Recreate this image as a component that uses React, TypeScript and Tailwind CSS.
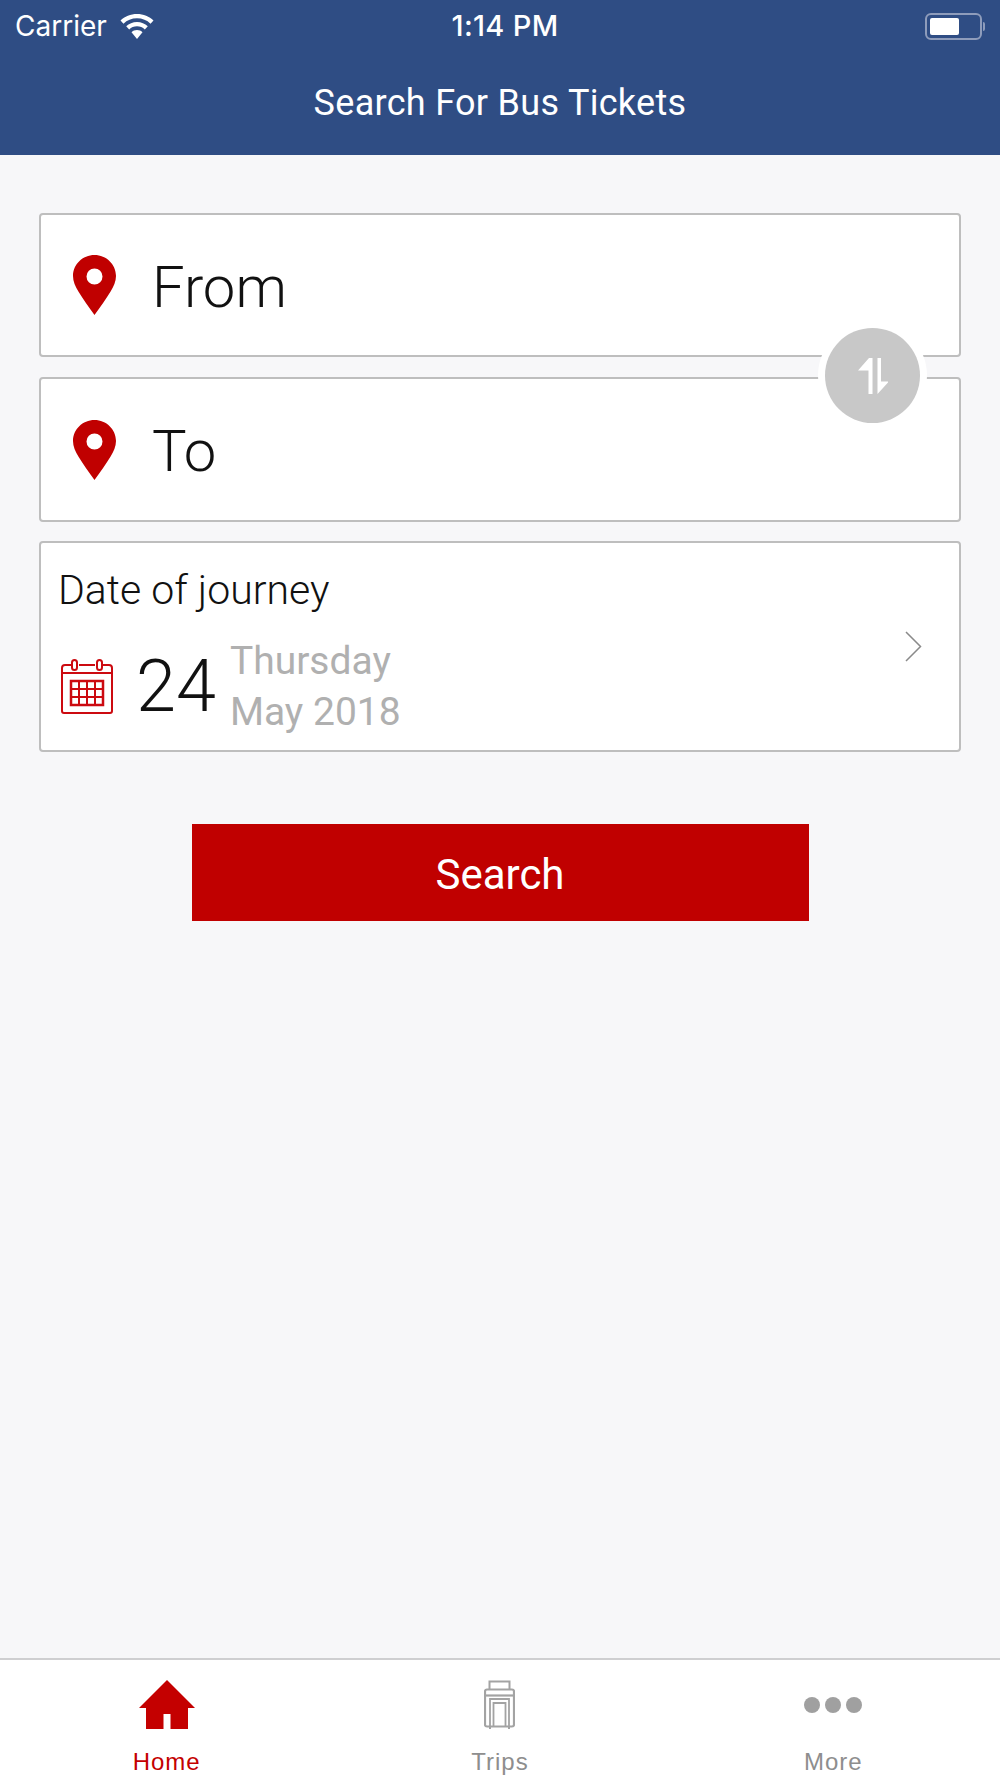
const Pin = ({ className }: { className: string }) => (
  <svg className={className} width="43" height="60" viewBox="0 0 43 60">
    <path
      fillRule="evenodd"
      d="M21.5 0C9.6 0 0 9.4 0 21c0 5.4 2.4 10.6 5.4 15.5C9.7 43.700 15.800 52 21.500 60c5.700-8 11.800-16.300 16.100-23.500C40.600 31.600 43 26.400 43 21 43 9.400 33.400 0 21.500 0zm0 13.500a8 8 0 1 1 0 16 8 8 0 0 1 0-16z"
      fill="#c00000"
    />
  </svg>
);

const Calendar = () => (
  <svg width="52" height="55" viewBox="0 0 52 55" fill="none" stroke="#cc0a10" strokeWidth="2" className="shrink-0">
    <path d="M11 6H4a3 3 0 0 0-3 3v43a2 2 0 0 0 2 2h46a2 2 0 0 0 2-2V9a3 3 0 0 0-3-3h-6M18 6h16" />
    <path d="M1 14h50" />
    <rect x="11" y="1" width="5" height="10" rx="2.500" fill="#fff" />
    <rect x="36" y="1" width="5" height="10" rx="2.500" fill="#fff" />
    <rect x="10" y="22" width="32" height="24" strokeWidth="2.500" />
    <path d="M18 22v24M26 22v24M34 22v24M10 30h32M10 38h32" />
  </svg>
);

const Home = () => (
  <svg width="56" height="49" viewBox="0 0 56 49">
    <path d="M28 0 56 28H49V49H31.500V34H24.500V49H7V28H0z" fill="#c40000" />
  </svg>
);

const Suitcase = () => (
  <svg width="31" height="49" viewBox="0 0 31 49" fill="none" stroke="#a3a3a3" strokeWidth="1.500">
    <path d="M5.500 9V1.500h20V9" strokeWidth="2" />
    <path d="M3 9.500h25a2 2 0 0 1 2 2v33a2 2 0 0 1-2 2H3a2 2 0 0 1-2-2v-33a2 2 0 0 1 2-2z" strokeWidth="2.200" />
    <path d="M1 15.500h29" strokeWidth="2.200" />
    <path d="M6 46V19h19v27M9.500 46V23h12v23" strokeWidth="1.800" />
    <path d="M6 47v2M25 47v2" strokeWidth="2" />
  </svg>
);

const Wifi = () => (
  <svg width="34" height="25" viewBox="0 0 34 25" fill="#fff">
    <path d="M17 0C10.500 0 4.700 2.500.500 6.500l3 3.200C7 6.300 11.700 4.300 17 4.300s10 2 13.500 5.400l3-3.200C29.300 2.500 23.500 0 17 0z" />
    <path d="M17 8c-4.200 0-8 1.600-10.800 4.300l3 3.200c2-2 4.800-3.200 7.800-3.200s5.800 1.200 7.800 3.200l3-3.200C25 9.600 21.200 8 17 8z" />
    <path d="M17 16c-2.200 0-4.100.9-5.500 2.300L17 25l5.500-6.700C21.100 16.900 19.200 16 17 16z" />
  </svg>
);

const Tab = ({ label, color, children }: { label: string; color: string; children: React.ReactNode }) => (
  <div className="flex flex-1 flex-col items-center">
    <div className="flex h-[49px] items-center">{children}</div>
    <span className={`mt-[18px] text-[24px] leading-[30px] tracking-[1px] font-['Liberation_Sans',sans-serif] ${color}`}>
      {label}
    </span>
  </div>
);

export default function App() {
  return (
    <div className="flex h-[1778px] w-[1000px] flex-col overflow-hidden bg-[#f7f7f9] font-['Roboto',sans-serif]">
      <header className="h-[155px] shrink-0 bg-[#2f4d84] text-white">
        <div className="flex h-[50px] items-center justify-between pl-[15px] pr-[15px] pt-[2px] font-['Inter',sans-serif] text-[28px]">
          <div className="flex w-[310px] items-center gap-[13px]">
            <span>Carrier</span>
            <Wifi />
          </div>
          <span className="text-[29px] font-medium tracking-[0.3px]">1:14 PM</span>
          <div className="flex w-[300px] items-center justify-end">
            <div className="h-[27px] w-[57px] rounded-[6px] border-2 border-[#8e9cbb] p-[3px]">
              <div className="h-full w-[29px] rounded-[2px] bg-white" />
            </div>
            <div className="ml-[1px] h-[9px] w-[2px] rounded-r-sm bg-[#8e9cbb]" />
          </div>
        </div>
        <h1 className="mt-[31px] text-center text-[36px] leading-[44px] font-normal tracking-[0.3px]">Search For Bus Tickets</h1>
      </header>

      <main className="relative flex-1 pl-[39px] pr-[39px] pt-[58px]">
        <div className="flex h-[144px] items-center rounded-[4px] border-2 border-[#bebebe] bg-white pl-[32px]">
          <Pin className="shrink-0" />
          <span className="ml-[36px] pt-[4px] text-[58px] font-light leading-none text-[#111]">From</span>
        </div>
        <div className="mt-[20px] flex h-[145px] items-center rounded-[4px] border-2 border-[#bebebe] bg-white pl-[32px]">
          <Pin className="shrink-0" />
          <span className="ml-[36px] pt-[3px] text-[58px] font-light leading-none text-[#111]">To</span>
        </div>

        <div className="absolute left-[818px] top-[166px] flex h-[109px] w-[109px] items-center justify-center rounded-full bg-white">
          <div className="flex h-[95px] w-[95px] items-center justify-center rounded-full bg-[#c8c8c8]">
            <svg width="30" height="36" viewBox="0 0 30 36" fill="#fff">
              <path d="M11 0h3.500v36H10.500V12.500H0z" />
              <path d="M19.500 0h3.500V23.500H31L19.500 36z" />
            </svg>
          </div>
        </div>

        <div className="mt-[19px] flex h-[211px] items-center justify-between rounded-[4px] border-2 border-[#bebebe] bg-white pl-[20px] pr-[37px]">
          <div className="pt-[10px]">
            <div className="-ml-[3px] text-[41px] font-light leading-[48px] text-[#111]">Date of journey</div>
            <div className="mt-[22px] flex items-center">
              <Calendar />
              <span className="ml-[23px] text-[72px] font-light leading-none text-[#111]">24</span>
              <div className="ml-[14px] text-[39px] leading-[51px] text-[#b0b0b0]">
                <div>Thursday</div>
                <div>May 2018</div>
              </div>
            </div>
          </div>
          <svg width="17" height="31" viewBox="0 0 17 31" fill="none" stroke="#8a8a8a" strokeWidth="1.500">
            <path d="M1 1l14.500 14.500L1 30" />
          </svg>
        </div>

        <button className="mx-auto mt-[72px] block h-[97px] w-[617px] bg-[#c00000] pt-[3px] text-[42px] text-white">Search</button>
      </main>

      <nav className="flex h-[120px] shrink-0 border-t-2 border-[#cfcfd1] bg-white pt-[20px]">
        <Tab label="Home" color="text-[#c40000]"><Home /></Tab>
        <Tab label="Trips" color="text-[#8e8e8e]"><Suitcase /></Tab>
        <Tab label="More" color="text-[#8e8e8e]">
          <div className="flex gap-[5px]">
            <span className="h-[16px] w-[16px] rounded-full bg-[#a0a0a0]" />
            <span className="h-[16px] w-[16px] rounded-full bg-[#a0a0a0]" />
            <span className="h-[16px] w-[16px] rounded-full bg-[#a0a0a0]" />
          </div>
        </Tab>
      </nav>
    </div>
  );
}
